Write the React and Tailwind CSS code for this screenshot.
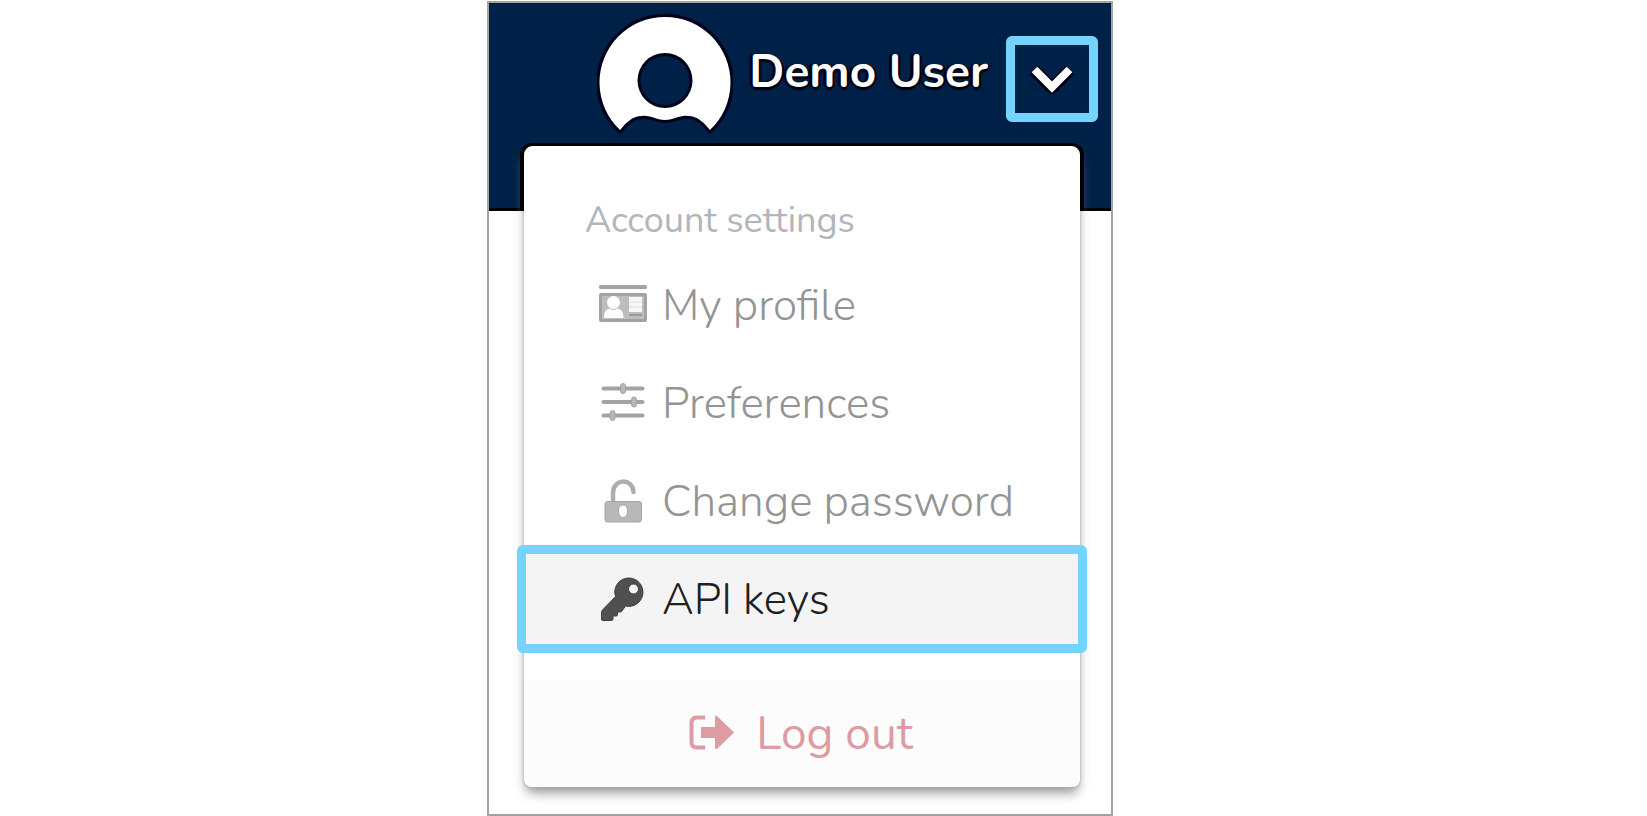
import React from 'react';

function Avatar() {
  return (
    <svg viewBox="0 0 136 120" className="h-[120px] w-[136px] shrink-0" aria-hidden="true">
      <path
        d="M23 116 A65.500 65.500 0 1 1 113 116 C107 109 101 102 91 102 C82 101 78 106 68 106 C58 106 54 101 45 102 C35 102 29 109 23 116 Z M68 39 A27.500 27.500 0 1 0 68 94 A27.500 27.500 0 1 0 68 39 Z"
        fill="#ffffff"
        fillRule="evenodd"
        stroke="#000018"
        strokeWidth="6"
        paintOrder="stroke"
      />
    </svg>
  );
}

function Chevron() {
  return (
    <svg viewBox="0 0 48 36" className="h-9 w-12" fill="none" aria-hidden="true">
      <path d="M6 9 L24 27 L42 9" stroke="#000010" strokeWidth="12" strokeLinejoin="round" />
      <path d="M6.500 8.500 L24 26 L41.500 8.500" stroke="#ffffff" strokeWidth="8" />
    </svg>
  );
}

function IdCard() {
  return (
    <svg viewBox="0 0 48 48" className="size-12 shrink-0" aria-hidden="true">
      <rect x="0" y="3" width="48" height="4" rx="1.500" fill="#a3a3a3" />
      <rect x="0" y="11" width="48" height="29" rx="2" fill="#a3a3a3" />
      <rect x="3" y="14" width="42" height="23" fill="#bdbdbd" />
      <circle cx="14.500" cy="20.500" r="6.500" fill="#ffffff" />
      <path d="M5 36 C5 29 8 27 11 26.500 Q14.500 29.500 18 26.500 C22 27 24.500 29 24.500 36 Z" fill="#ffffff" />
      <rect x="30" y="15" width="13" height="15" fill="#f7f7f7" />
      <path d="M30 20 H43 M30 25 H43" stroke="#dddddd" strokeWidth="1" />
      <path d="M30 33 H43" stroke="#999999" strokeWidth="2" />
    </svg>
  );
}

function Sliders() {
  return (
    <svg viewBox="0 0 48 48" className="size-12 shrink-0" aria-hidden="true">
      <path d="M4.500 8.500 H43.500 M4.500 22 H43.500 M4.500 35.500 H43.500" stroke="#a3a3a3" strokeWidth="4" strokeLinecap="round" />
      <g fill="#b8b8b8" stroke="#a3a3a3" strokeWidth="1">
        <rect x="21.500" y="3.500" width="5" height="10" rx="2.500" />
        <rect x="32.500" y="17" width="5" height="10" rx="2.500" />
        <rect x="11" y="30.500" width="5" height="10" rx="2.500" />
      </g>
    </svg>
  );
}

function OpenLock() {
  return (
    <svg viewBox="0 0 48 48" className="size-12 shrink-0" aria-hidden="true">
      <path d="M14 26 V15 C14 0 34 0 34.500 14" fill="none" stroke="#adadad" strokeWidth="4.500" strokeLinecap="round" />
      <path
        fillRule="evenodd"
        fill="#b8b8b8"
        stroke="#a5a5a5"
        strokeWidth="1"
        d="M8.500 23.500 H40 Q42.500 23.500 42.500 26 V41.500 Q42.500 44 40 44 H8.500 Q6 44 6 41.500 V26 Q6 23.500 8.500 23.500 Z M24 27 Q19.500 27 19.500 33 Q19.500 39.500 24 39.500 Q28.500 39.500 28.500 33 Q28.500 27 24 27 Z"
      />
    </svg>
  );
}

function Key() {
  return (
    <svg viewBox="0 0 48 48" className="size-12 shrink-0" aria-hidden="true">
      <path
        fillRule="evenodd"
        fill="#505050"
        stroke="#404040"
        strokeWidth="1"
        strokeLinejoin="round"
        d="M30.500 2 A14 14 0 0 0 16.500 20.500 L3.500 34 Q2.500 35 2.500 37 V43 Q2.500 44.500 4 44.500 H12.500 Q14 44.500 14 43 V40 H17 Q18.500 40 18.500 38.500 V36 H21 Q22 36 23 35 L26.500 30 A14.200 14.200 0 1 0 30.500 2 Z M34.500 8 A5 5 0 1 1 34.500 18 A5 5 0 1 1 34.500 8 Z"
      />
    </svg>
  );
}

function Exit() {
  return (
    <svg viewBox="0 0 48 48" className="size-12 shrink-0" aria-hidden="true">
      <path d="M17 7.500 H9 Q3.500 7.500 3.500 13 V32 Q3.500 37.500 9 37.500 H17" fill="none" stroke="#dc9ca2" strokeWidth="4" />
      <path d="M13 17 H27 V7 Q27.500 5 29.500 6.500 L46 22.500 L29.500 38.500 Q27.500 40 27 38 V28 H13 Z" fill="#dc9ca2" />
    </svg>
  );
}

const ITEMS = [
  { label: 'My profile', Icon: IdCard },
  { label: 'Preferences', Icon: Sliders },
  { label: 'Change password', Icon: OpenLock },
];

const ROW = 'flex h-[98px] w-full items-center gap-[15px] whitespace-nowrap pl-[75px] text-left text-[44px] leading-[48px]';

export default function App() {
  return (
    <div className="flex min-h-screen justify-center bg-white pt-px pr-[47px] font-['Nunito','Open_Sans',sans-serif] font-light">
      <div className="flex w-full max-w-[626px] flex-col border-2 border-[#a3a3a3] bg-white">
        <header className="flex h-[208px] shrink-0 items-start justify-end border-b-3 border-black bg-[#002147] pr-[13px]">
          <div className="mt-[11px]">
            <Avatar />
          </div>
          <span className="mt-[45px] ml-4 whitespace-nowrap text-[46px] leading-[48px] font-bold text-white [text-shadow:-3px_0_1px_#000010,0_3px_1px_#000010,2px_1px_1px_#000010]">
            Demo User
          </span>
          <button
            type="button"
            aria-label="Open account menu"
            className="mt-[33px] ml-[18px] flex h-[86px] w-[92px] shrink-0 items-center justify-center rounded-md border-9 border-[#74d4ff]"
          >
            <Chevron />
          </button>
        </header>

        <nav
          aria-label="Account settings"
          className="-mt-[65px] mr-[31px] mb-6 ml-[35px] flex flex-col rounded-lg bg-white shadow-[0_1px_3px_#aaaaaa,0_8px_12px_-2px_#999999]"
        >
          <div className="-mx-1 -mt-[3px] h-[68px] rounded-t-xl border-x-4 border-t-3 border-black bg-white" />
          <h2 className="-mt-[14px] pl-[61px] text-[36px] leading-[48px] font-normal text-[#b0b6bc]">Account settings</h2>
          <ul className="mt-3">
            {ITEMS.map(({ label, Icon }) => (
              <li key={label}>
                <button type="button" className={`${ROW} text-[#949494]`}>
                  <Icon />
                  {label}
                </button>
              </li>
            ))}
            <li className="-mx-[7px] -mt-[6px]">
              <button
                type="button"
                className="flex h-[108px] w-full items-center gap-[15px] rounded-md border-9 border-[#74d4ff] bg-[#f4f4f4] pt-px pl-[73px] text-left text-[44px] leading-[48px] whitespace-nowrap text-[#202020]"
              >
                <Key />
                API keys
              </button>
            </li>
          </ul>
          <button
            type="button"
            className="mt-[27px] flex h-[107px] w-full items-center justify-center gap-5 rounded-b-lg bg-[#fcfcfc] pr-[3px] text-[46px] leading-[48px] font-normal text-[#dc9ca2]"
          >
            <Exit />
            Log out
          </button>
        </nav>
      </div>
    </div>
  );
}
